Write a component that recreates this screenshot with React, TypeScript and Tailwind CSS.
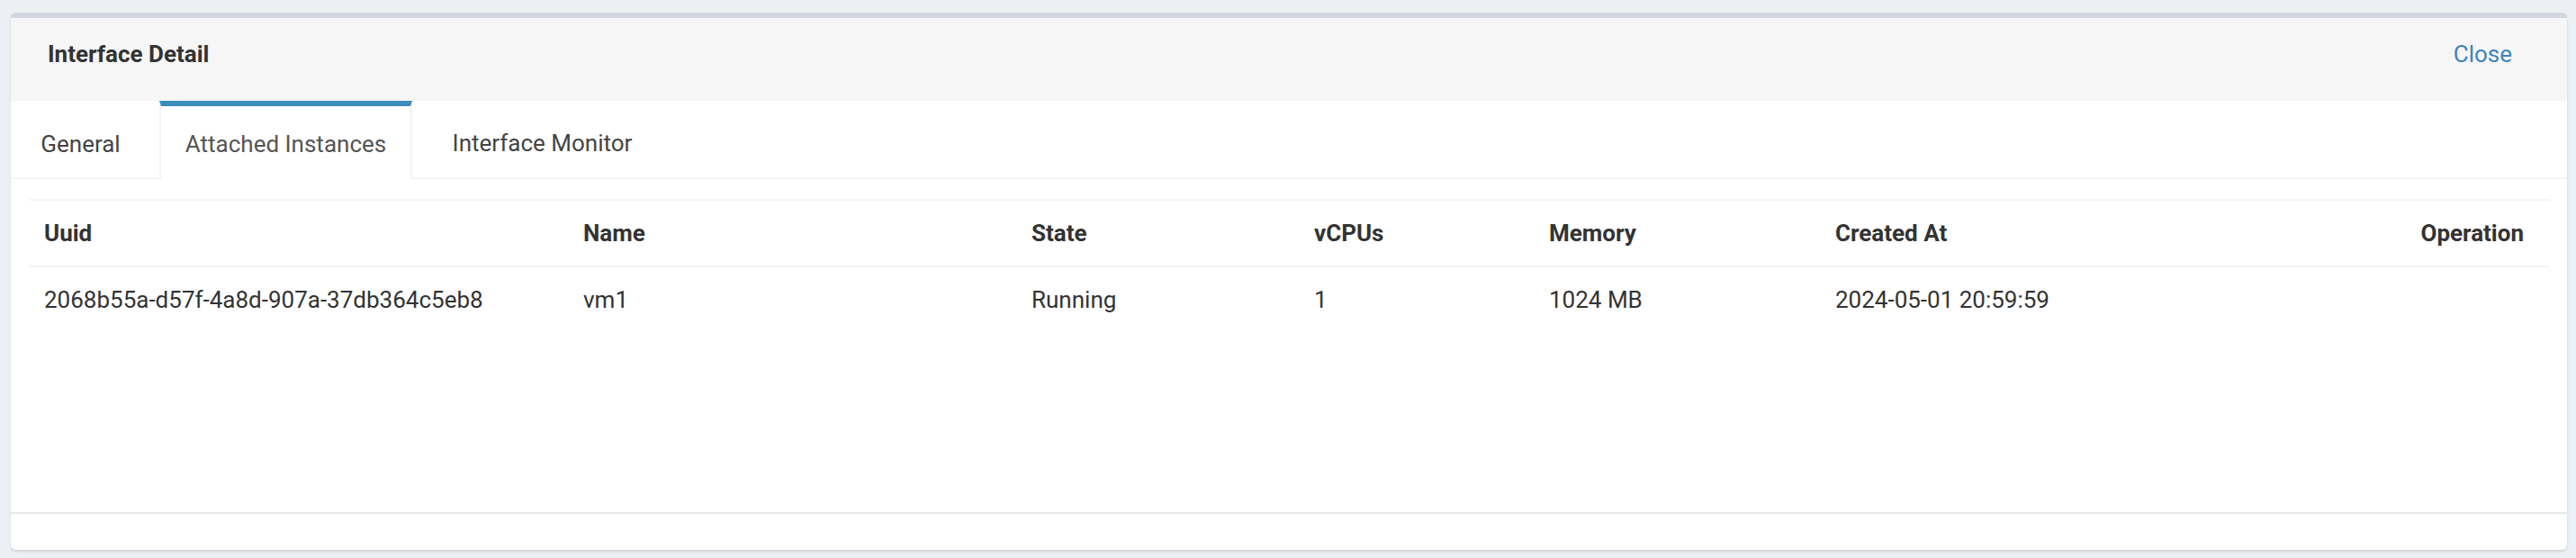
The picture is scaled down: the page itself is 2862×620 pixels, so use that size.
import React from "react";

const cols = [
  { label: "Uuid", w: "w-[599px]" },
  { label: "Name", w: "w-[498px]" },
  { label: "State", w: "w-[314px]" },
  { label: "vCPUs", w: "w-[261px]" },
  { label: "Memory", w: "w-[318px]" },
  { label: "Created At", w: "w-[500px]" },
  { label: "Operation", w: "" },
];

const row = [
  "2068b55a-d57f-4a8d-907a-37db364c5eb8",
  "vm1",
  "Running",
  "1",
  "1024 MB",
  "2024-05-01 20:59:59",
  "",
];

export default function App() {
  return (
    <div
      className="w-[2862px] h-[620px] bg-[#ecf0f5] pt-[14px] pl-[12px] pr-[10px] text-[#333]"
      style={{ fontFamily: "Roboto, 'Liberation Sans', sans-serif" }}
    >
      <div className="bg-white rounded-[6px] border-t-[6px] border-[#d2d6de] shadow-[0_2px_3px_rgba(0,0,0,0.12)] overflow-hidden">
        {/* Header */}
        <div className="h-[92px] bg-[#f6f6f6] flex items-center justify-between pl-[41px] pr-[61px] pb-[12px]">
          <div className="text-[26px] font-bold leading-[40px] text-[#333]">Interface Detail</div>
          <div className="text-[26px] leading-[40px] text-[#3f85b8]">Close</div>
        </div>
        {/* Tabs */}
        <div className="h-[87px] flex border-b-2 border-[#f4f4f4] text-[26px] leading-[40px] text-[#444]">
          <div className="w-[155px] mr-[10px] flex items-center justify-center pt-[9px] mb-[-2px]">General</div>
          <div className="w-[281px] flex items-center justify-center pt-[3px] border-t-[6px] border-t-[#3c8dbc] border-x-2 border-x-[#f4f4f4] bg-white mb-[-2px] text-[#555]">
            Attached Instances
          </div>
          <div className="w-[263px] pl-[26px] flex items-center justify-center pt-[9px]">Interface Monitor</div>
        </div>
        {/* Content */}
        <div className="h-[370px] pt-[22px] pl-[21px] pr-[19px]">
          <table className="w-full table-fixed border-collapse text-[26px] leading-[40px]">
            <colgroup>
              {cols.map((c, i) => (
                <col key={i} className={c.w} />
              ))}
            </colgroup>
            <thead>
              <tr className="border-t-2 border-[#f4f4f4]">
                {cols.map((c, i) => (
                  <th
                    key={i}
                    className={
                      "py-[16px] font-bold text-[#333] " +
                      (i === cols.length - 1 ? "text-right pr-[29px]" : "text-left pl-[16px]")
                    }
                  >
                    {c.label}
                  </th>
                ))}
              </tr>
            </thead>
            <tbody>
              <tr className="border-t-2 border-[#f4f4f4]">
                {row.map((v, i) => (
                  <td key={i} className="pt-[16px] pb-[20px] pl-[16px] text-left text-[#333] whitespace-nowrap">
                    {v}
                  </td>
                ))}
              </tr>
            </tbody>
          </table>
        </div>
        {/* Footer */}
        <div className="h-[42px] border-t-2 border-[#e6e8eb]" />
      </div>
    </div>
  );
}
